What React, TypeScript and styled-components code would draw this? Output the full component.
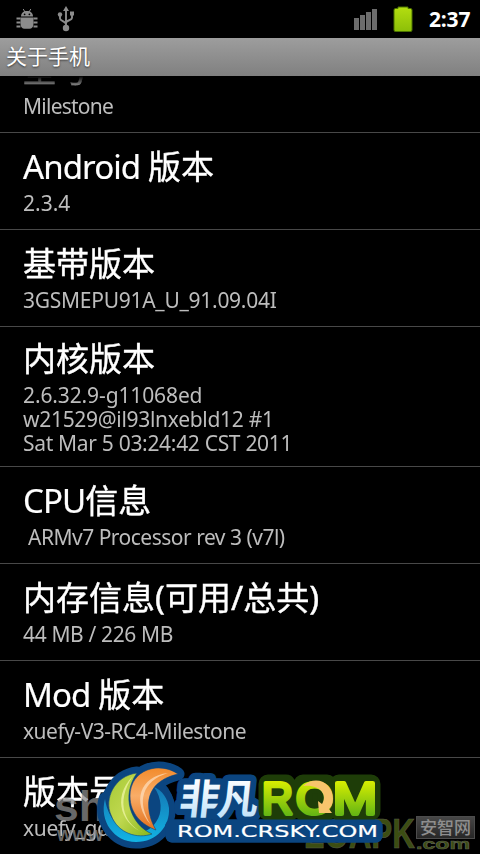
import * as React from 'react';
import styled, { createGlobalStyle } from 'styled-components';

type InfoLine = {
  text: string;
  spacing?: number;
};

type InfoItem = {
  latin?: string;
  title: string;
  lines: InfoLine[];
  tall?: boolean;
};

const items: InfoItem[] = [
  { title: '型号', lines: [{ text: 'Milestone', spacing: -0.75 }] },
  { latin: 'Android ', title: '版本', lines: [{ text: '2.3.4' }] },
  { title: '基带版本', lines: [{ text: '3GSMEPU91A_U_91.09.04I', spacing: -0.27 }] },
  {
    title: '内核版本',
    tall: true,
    lines: [
      { text: '2.6.32.9-g11068ed', spacing: -0.12 },
      { text: 'w21529@il93lnxebld12 #1', spacing: -0.3 },
      { text: 'Sat Mar 5 03:24:42 CST 2011', spacing: -0.31 },
    ],
  },
  { latin: 'CPU', title: '信息', lines: [{ text: ' ARMv7 Processor rev 3 (v7l)', spacing: -0.5 }] },
  { title: '内存信息(可用/总共)', lines: [{ text: '44 MB / 226 MB', spacing: -0.36 }] },
  { latin: 'Mod ', title: '版本', lines: [{ text: 'xuefy-V3-RC4-Milestone', spacing: -0.5 }] },
  { title: '版本号', lines: [{ text: 'xuefy_gd', spacing: -0.3 }] },
];
//////////////////////////////////////////////////////////////////////////////////////////////////////
const GlobalStyle = createGlobalStyle`
  body {
    margin: 0;
    background: #000;
  }
`;

const Screen = styled.div`
  position: relative;
  width: 480px;
  height: 854px;
  overflow: hidden;
  display: flex;
  flex-direction: column;
  background: #000;
  font-family: 'Noto Sans', 'Noto Sans CJK SC', sans-serif;
`;

const StatusBar = styled.div`
  height: 38px;
  flex: none;
  box-sizing: border-box;
  padding: 0 10px 0 16px;
  display: flex;
  align-items: center;
  justify-content: space-between;
`;

const StatusGroup = styled.div<{ $gap: number }>`
  display: flex;
  align-items: center;
  gap: ${props => props.$gap}px;

  svg {
    display: block;
  }
`;

const Clock = styled.div`
  width: 41px;
  color: #fff;
  font-family: 'Open Sans', sans-serif;
  font-size: 21px;
  font-weight: 700;
  line-height: 38px;
  letter-spacing: -0.2px;
`;

const TitleBar = styled.div`
  height: 38px;
  flex: none;
  padding-left: 6px;
  background: linear-gradient(#9d9d9d, #808080);
  color: #fff;
  font-size: 21px;
  line-height: 36px;
  text-shadow: 0 1px 2px rgba(0, 0, 0, 0.6);
`;

const List = styled.div`
  flex: 1;
  min-height: 0;
  overflow: hidden;
  display: flex;
  flex-direction: column;
  justify-content: flex-end;
  margin-bottom: -1px;
  mask-image: linear-gradient(transparent, #000 18px);
`;

const Row = styled.div<{ $tall?: boolean }>`
  height: ${props => (props.$tall ? 140 : 97)}px;
  flex: none;
  box-sizing: border-box;
  border-bottom: 1px solid #484848;
  padding: ${props => (props.$tall ? 10 : 12)}px 0 0 23px;
`;

const Title = styled.div`
  color: #fff;
  font-size: 33px;
  line-height: 44px;
  margin-bottom: 2px;
  white-space: pre;
  -webkit-text-stroke: 0.4px #fff;
`;

const Latin = styled.span`
  letter-spacing: -0.9px;
  -webkit-text-stroke: 0.2px #fff;
`;

const Line = styled.div<{ $spacing?: number }>`
  color: #bdbdbd;
  font-size: 21px;
  line-height: 24px;
  letter-spacing: ${props => props.$spacing || 0}px;
  white-space: pre;
`;

const Watermarks = styled.svg`
  position: absolute;
  left: 0;
  bottom: 0;
  display: block;
`;
//////////////////////////////////////////////////////////////////////////////////////////////////////
const BugIcon = () => (
  <svg width="22" height="24" viewBox="0 0 22 24" fill="#8c8c8c">
    <path d="M5 9.500C5 6 7.500 4 11 4s6 2 6 5.500z" />
    <path d="M7.200 2l1.800 3M14.800 2L13 5" stroke="#8c8c8c" />
    <path d="M4.500 10.500h13V17c0 2.900-1.800 4.800-4 4.800h-5c-2.200 0-4-1.900-4-4.800z" />
    <path d="M.500 11.500h4M.500 15.500h4M.500 19.500h4M21.500 11.500h-4M21.500 15.500h-4M21.500 19.500h-4" fill="none" stroke="#8c8c8c" strokeWidth="1.800" />
    <circle cx="8.600" cy="7.300" r=".9" fill="#000" />
    <circle cx="13.400" cy="7.300" r=".9" fill="#000" />
  </svg>
);

const UsbIcon = () => (
  <svg width="18" height="26" viewBox="0 0 18 26" fill="#8c8c8c">
    <path d="M9 4v18M3 9v3.500c0 2.500 6 3 6 6M15 8v4c0 2.500-6 2-6 5" fill="none" stroke="#8c8c8c" strokeWidth="1.900" />
    <path d="M9 0l3 5H6z" />
    <circle cx="9" cy="22" r="3.200" />
    <circle cx="3" cy="8.500" r="2.200" />
    <path d="M13 5.500h4v4h-4z" />
  </svg>
);

const SignalIcon = () => (
  <svg width="23" height="22" viewBox="0 0 23 22" fill="#6c6c6c">
    <path d="M0 10h5v12H0zM6 7h5v15H6zM12 4h5v18h-5zM18 1h5v21h-5z" />
  </svg>
);

const BatteryIcon = () => (
  <svg width="22" height="28" viewBox="0 0 22 28">
    <defs>
      <linearGradient id="battery" x1="0" y1="0" x2="0" y2="1">
        <stop offset="0" stopColor="#b4de10" />
        <stop offset="1" stopColor="#8cbf08" />
      </linearGradient>
    </defs>
    <path
      d="M6 3.500V2h10v1.500h2.500q1.500 0 1.500 1.500v20q0 1.500-1.500 1.500h-15Q2 26.500 2 25V5q0-1.500 1.500-1.500z"
      fill="url(#battery)"
      stroke="#4c7400"
      strokeWidth="1"
    />
  </svg>
);
//////////////////////////////////////////////////////////////////////////////////////////////////////
const orangeLeaf = 'M178 774C160 761 130 769 130 796C130 814 142 825 156 830C147 815 139 783 178 774Z';
const greenLeaf = 'M137 773C114 776 104 799 111 815C118 834 138 839 152 834C130 824 121 796 137 773Z';
const ring = 'M105 799C99 821 114 842 136 842C157 842 170 826 169 808C168 799 162 790 154 787C162 798 163 813 156 822C143 842 110 833 105 799Z';

const Overlay = () => (
  <Watermarks width="480" height="104" viewBox="0 750 480 104">
    <defs>
      <linearGradient id="green" x1="0" y1="0" x2="1" y2="1">
        <stop offset="0" stopColor="#a6c934" />
        <stop offset=".5" stopColor="#c0d850" />
        <stop offset="1" stopColor="#86b51a" />
      </linearGradient>
      <linearGradient id="orange" x1="0" y1="0" x2="0" y2="1">
        <stop offset="0" stopColor="#f28b2c" />
        <stop offset=".45" stopColor="#f9ad68" />
        <stop offset="1" stopColor="#e2701c" />
      </linearGradient>
      <linearGradient id="cyan" x1="0" y1="0" x2="0" y2="1">
        <stop offset="0" stopColor="#1477b4" />
        <stop offset="1" stopColor="#12b4e4" />
      </linearGradient>
      <linearGradient id="ice" x1="0" y1="0" x2="0" y2="1">
        <stop offset=".2" stopColor="#ffffff" />
        <stop offset="1" stopColor="#b4dcf8" />
      </linearGradient>
      <linearGradient id="lime" gradientUnits="userSpaceOnUse" x1="0" y1="780" x2="0" y2="816">
        <stop offset="0" stopColor="#dcf000" />
        <stop offset="1" stopColor="#62b414" />
      </linearGradient>
      <linearGradient id="badge" x1="0" y1="0" x2="0" y2="1">
        <stop offset="0" stopColor="#474747" />
        <stop offset="1" stopColor="#262626" />
      </linearGradient>
    </defs>

    <g fill="#8b8b8b" fillOpacity=".75" fontFamily="Liberation Sans, sans-serif" fontWeight="700">
      <text x="54" y="821" fontSize="43" textLength="52" lengthAdjust="spacingAndGlyphs">sh</text>
      <text x="57" y="841" fontSize="20" textLength="46" lengthAdjust="spacingAndGlyphs">www</text>
    </g>

    <g fontFamily="Liberation Sans, sans-serif" fontWeight="700" fill="#3c4d12" stroke="#5a5f4c" strokeWidth=".6">
      <text x="305" y="848" fontSize="43" textLength="110" lengthAdjust="spacingAndGlyphs">ZOAPK</text>
      <text x="416" y="849" fontSize="15" textLength="54" lengthAdjust="spacingAndGlyphs">.com</text>
    </g>
    <rect x="416.500" y="816.500" width="58" height="22" fill="url(#badge)" stroke="#4c4c4c" />
    <text x="420" y="834" fontFamily="Noto Sans CJK SC, sans-serif" fontWeight="500" fontSize="17" fill="#8e8e8e">安智网</text>

    <g fill="#0b4580" stroke="#0b4580" strokeWidth="13" strokeLinejoin="round">
      <path d={orangeLeaf} />
      <path d={greenLeaf} />
      <path d={ring} />
      <circle cx="137" cy="809" r="31" />
    </g>
    <path d={ring} fill="url(#cyan)" />
    <path d={greenLeaf} fill="url(#green)" stroke="#0b4580" strokeWidth=".6" />
    <path d="M133 776C110 799 124 827 145 833C126 827 114 803 133 776Z" fill="#ecf4a0" fillOpacity=".8" />
    <path d={orangeLeaf} fill="url(#orange)" stroke="#0b4580" strokeWidth=".6" />
    <path d="M168 773C140 776 131 802 151 825C136 802 142 781 168 773Z" fill="#fde0c0" fillOpacity=".7" />

    <g strokeLinejoin="round" strokeWidth="13" fontFamily="Noto Sans CJK SC, sans-serif" fontSize="41" fontWeight="700">
      <path d="M172 826H376V836H172Z" fill="#0b4580" stroke="#0b4580" />
      <text transform="translate(178 814) skewX(-6)" textLength="79" fill="url(#ice)" stroke="#0b4580" paintOrder="stroke">
        非凡
      </text>
    </g>

    <path
      d="M268 784H286L290 792L286 800L290 811H268ZM303 784H327V811H303ZM339 784H371V811H339Z"
      fill="#1e3d08"
      stroke="#1e3d08"
      strokeWidth="19"
      strokeLinejoin="round"
    />
    <path d="M172 826H376V836H172Z" fill="#0b4580" stroke="#0b4580" strokeWidth="13" strokeLinejoin="round" />
    <g fontFamily="Liberation Sans, sans-serif" fontSize="45" fill="url(#lime)" stroke="url(#lime)" strokeWidth="4" strokeLinejoin="round">
      <text x="262" y="814" textLength="31" lengthAdjust="spacingAndGlyphs">R</text>
      <text x="296" y="814" textLength="37" lengthAdjust="spacingAndGlyphs">O</text>
      <text x="333" y="814" textLength="44" lengthAdjust="spacingAndGlyphs">M</text>
    </g>
    <path d="M303 786C316 774 333 783 333 799C333 804 331 807 329 809L332 813L319 813L318 801L322 804C328 795 320 784 303 786Z" fill="#f8c56c" />

    <text
      x="177"
      y="837"
      textLength="201"
      lengthAdjust="spacingAndGlyphs"
      fontFamily="DejaVu Sans, sans-serif"
      fontSize="16.500"
      fill="#fff"
      stroke="#fff"
      strokeWidth=".2"
    >
      ROM.CRSKY.COM
    </text>
  </Watermarks>
);
//////////////////////////////////////////////////////////////////////////////////////////////////////
const App = () => (
  <Screen>
    <GlobalStyle />
    <StatusBar>
      <StatusGroup $gap={19}>
        <BugIcon />
        <UsbIcon />
      </StatusGroup>
      <StatusGroup $gap={15}>
        <SignalIcon />
        <BatteryIcon />
        <Clock>2:37</Clock>
      </StatusGroup>
    </StatusBar>
    <TitleBar>关于手机</TitleBar>
    <List>
      {items.map((item, index) => (
        <Row key={index} $tall={item.tall}>
          <Title>
            {item.latin && <Latin>{item.latin}</Latin>}
            {item.title}
          </Title>
          {item.lines.map(line => (
            <Line key={line.text} $spacing={line.spacing}>
              {line.text}
            </Line>
          ))}
        </Row>
      ))}
    </List>
    <Overlay />
  </Screen>
);

export default App;
